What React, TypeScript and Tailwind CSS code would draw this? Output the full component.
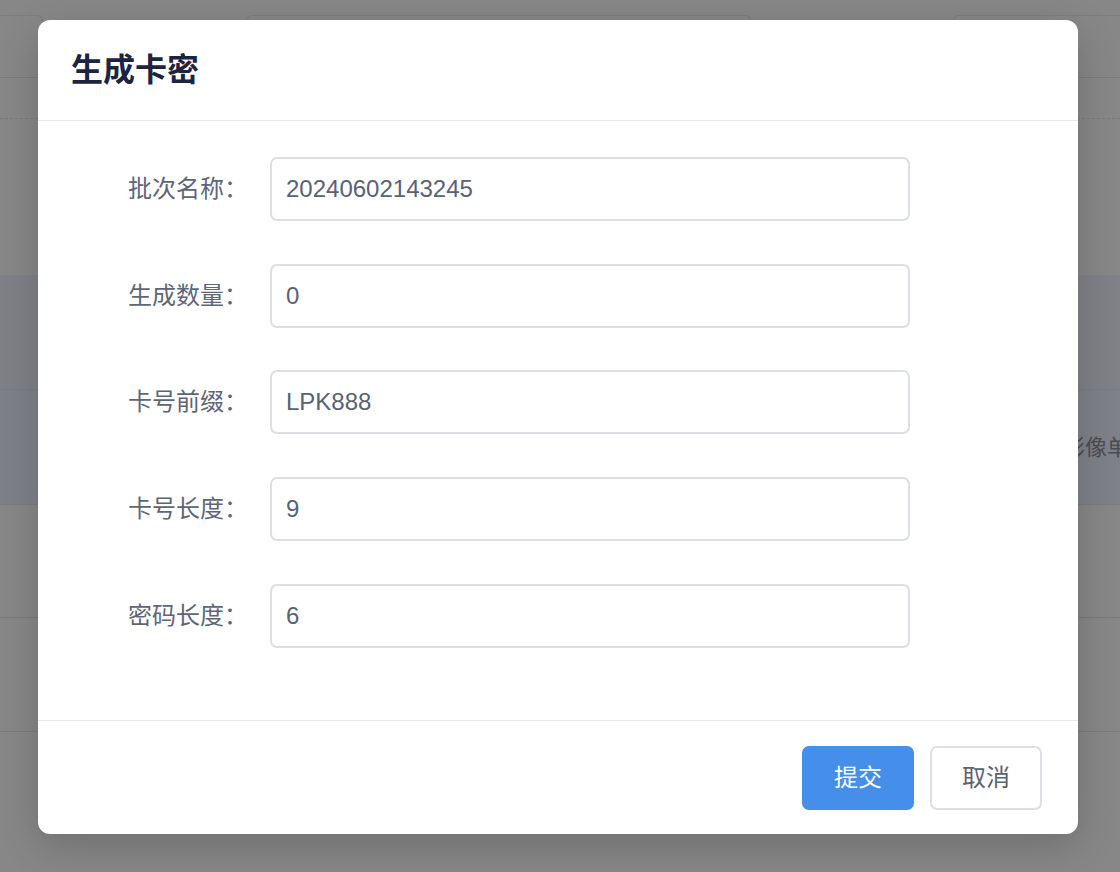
import React from "react";

const FONT = '"Liberation Sans", "Noto Sans CJK SC", sans-serif';

function Field({ label, value }: { label: string; value: string }) {
  return (
    <div className="flex items-center">
      <div className="w-[232px] shrink-0 pr-[22px] text-right text-[24px] leading-none text-[#5e6676]">
        {label}
      </div>
      <div className="flex h-[64px] w-[640px] items-center rounded-[7px] border-2 border-[#dcdfe6] bg-white pl-[14px] text-[24px] text-[#5a6272]">
        {value}
      </div>
    </div>
  );
}

export default function App() {
  return (
    <div
      className="relative h-[872px] w-[1120px] overflow-hidden bg-[#878787]"
      style={{ fontFamily: FONT }}
    >
      {/* background page (dimmed) */}
      <div className="flex flex-col">
        <div className="flex h-[78px] items-start border-b-[1.5px] border-[#7b7b7b] pt-[15px]">
          <div className="-ml-[20px] h-[48px] w-[63px] shrink-0 rounded-t-[6px] border-[1.5px] border-b-0 border-[#7d7d7d]" />
          <div className="ml-[203px] h-[48px] w-[505px] shrink-0 rounded-t-[6px] border-[1.5px] border-b-0 border-[#7d7d7d]" />
          <div className="ml-[202px] h-[48px] w-[200px] shrink-0 rounded-t-[6px] border-[1.5px] border-b-0 border-[#7d7d7d]" />
        </div>
        <div className="h-[41px] border-b-[1.5px] border-dashed border-[#7b7b7b]" />
        <div className="h-[156px]" />
        <div className="h-[115px] border-b-[1.5px] border-[#7a7c80] bg-[#7f8187]" />
        <div className="flex h-[115px] items-center border-b-[1.5px] border-[#7a7a7a] bg-[#7e8188] pl-[1063px]">
          <span className="whitespace-nowrap text-[22px] text-[#4a4c52]">影像单</span>
        </div>
        <div className="h-[113px] border-b-[1.5px] border-[#7a7a7a]" />
        <div className="h-[114px] border-b-[1.5px] border-[#7a7a7a]" />
      </div>

      {/* modal */}
      <div className="absolute left-[38px] top-[20px] flex h-[814px] w-[1040px] flex-col rounded-[12px] bg-white shadow-[0_12px_40px_rgba(0,0,0,0.18)]">
        <div className="flex h-[101px] shrink-0 items-center border-b-[1.5px] border-[#e8e8ea] pl-[33px]">
          <h1 className="text-[32px] font-bold leading-none text-[#1b2440]">生成卡密</h1>
        </div>
        <div className="flex flex-1 flex-col gap-[42.7px] pt-[36px]">
          <Field label="批次名称：" value="20240602143245" />
          <Field label="生成数量：" value="0" />
          <Field label="卡号前缀：" value="LPK888" />
          <Field label="卡号长度：" value="9" />
          <Field label="密码长度：" value="6" />
        </div>
        <div className="flex h-[114px] shrink-0 items-start justify-end gap-[16px] border-t-[1.5px] border-[#e8e8ea] pr-[36px] pt-[25px]">
          <button className="flex h-[64px] w-[112px] items-center justify-center rounded-[7px] bg-[#458eea] text-[24px] text-white">
            提交
          </button>
          <button className="flex h-[64px] w-[112px] items-center justify-center rounded-[7px] border-2 border-[#dcdfe6] bg-white text-[24px] text-[#5a6272]">
            取消
          </button>
        </div>
      </div>
    </div>
  );
}
